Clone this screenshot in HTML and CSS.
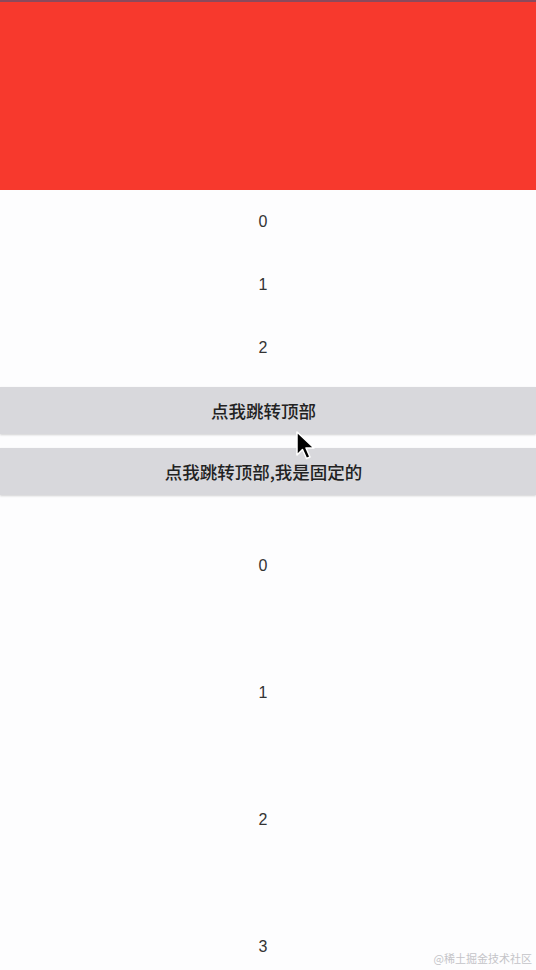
FILE: index.html
```html
<!DOCTYPE html>
<html lang="zh">
<head>
<meta charset="utf-8">
<link rel="stylesheet" href="styles.css">
</head>
<body>
<div class="page">
  <header class="banner"></header>
  <ul class="list small">
    <li>0</li>
    <li>1</li>
    <li>2</li>
  </ul>
  <div class="btn btn-first">点我跳转顶部</div>
  <div class="btn btn-fixed">点我跳转顶部,我是固定的</div>
  <ul class="list big">
    <li>0</li>
    <li>1</li>
    <li>2</li>
    <li>3</li>
  </ul>
  <div class="watermark">@稀土掘金技术社区</div>
  <svg class="cursor" width="22" height="30" viewBox="0 0 22 30">
    <path d="M1 1 L1 24 L6.5 18.5 L10.5 27.5 L14 26 L10 17 L18 17 Z" fill="#000" stroke="#fff" stroke-width="1.5" stroke-linejoin="round"/>
  </svg>
</div>
</body>
</html>
```
FILE: styles.css
```css
html, body {
  margin: 0;
  padding: 0;
  background: #fdfdfe;
}
.page {
  position: relative;
  width: 536px;
  height: 970px;
  overflow: hidden;
  font-family: "Liberation Sans", "Noto Sans CJK SC", sans-serif;
  color: #333;
}
.banner {
  height: 188px;
  background: #f7392d;
  border-top: 2px solid #8c4a5c;
}
.list {
  list-style: none;
  margin: 0;
  padding: 0;
}
.list li {
  display: flex;
  align-items: center;
  justify-content: center;
  padding-right: 10px;
  font-size: 16px;
  color: #333;
}
.small li {
  height: 63px;
}
.big {
  margin-top: 7px;
}
.big li {
  height: 127px;
}
.btn {
  height: 47px;
  display: flex;
  align-items: center;
  justify-content: center;
  padding-right: 9px;
  background: #d8d8dc;
  box-shadow: 0 1px 2px rgba(0, 0, 0, 0.18);
  font-family: "Noto Sans CJK SC", sans-serif;
  font-size: 17.5px;
  font-weight: 500;
  color: #222;
}
.btn-first {
  margin-top: 8px;
}
.btn-fixed {
  margin-top: 14px;
}
.watermark {
  position: absolute;
  right: 4px;
  bottom: 4px;
  font-family: "Noto Sans CJK SC", sans-serif;
  font-size: 11px;
  color: #c4c4c8;
}
.cursor {
  position: absolute;
  left: 296px;
  top: 431px;
}
```
